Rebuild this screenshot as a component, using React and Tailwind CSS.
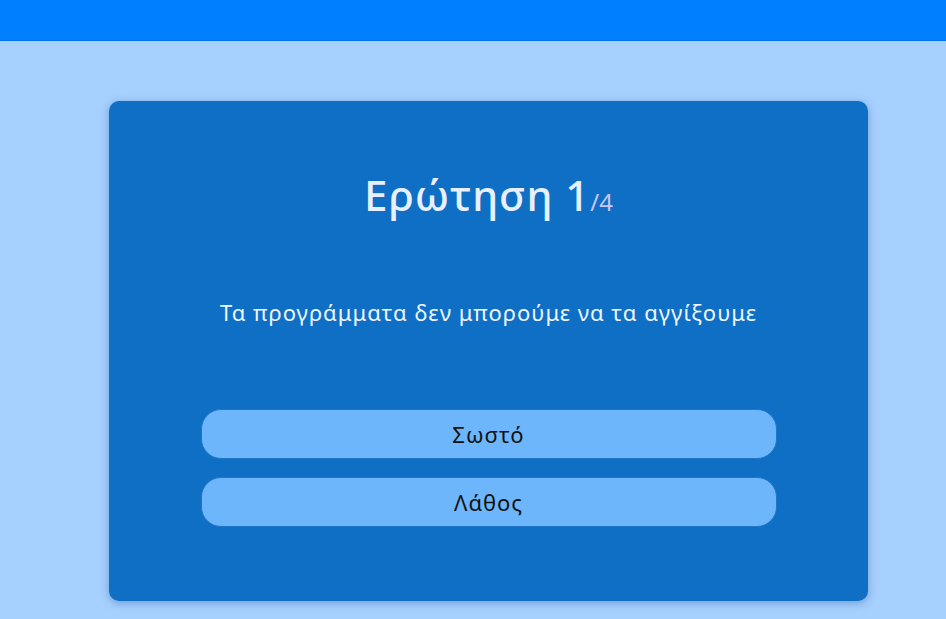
export default function App() {
  const answers = ["Σωστό", "Λάθος"];
  return (
    <div
      className="min-h-[619px] bg-[#a6d0fe]"
      style={{ fontFamily: '"Noto Sans", "Open Sans", sans-serif' }}
    >
      <header className="h-[41px] bg-[#007fff] border-b border-[#0070f0]" />
      <main className="pt-[60px] pl-[109px] pb-[18px]">
        <div className="w-[759px] h-[500px] rounded-[10px] bg-[#0f6fc5] shadow-[0_2px_8px_rgba(0,60,140,0.35)] flex flex-col items-center">
          <h1 className="mt-[68px] text-[42px] leading-[52px] font-medium text-[#e8f0ff] tracking-[1px]">
            Ερώτηση 1<span className="text-[24px] font-normal text-[#c9c6f5] tracking-normal">/4</span>
          </h1>
          <p className="mt-[70px] text-[22px] leading-[28px] text-[#eef5ff] tracking-[1px]">
            Τα προγράμματα δεν μπορούμε να τα αγγίξουμε
          </p>
          <div className="mt-[83px] w-[576px] flex flex-col gap-[18px]">
            {answers.map((a) => (
              <button
                key={a}
                type="button"
                className="h-[50px] rounded-[20px] bg-[#6db6fb] border border-[#1f77c8] text-[22px] tracking-[1px] text-[#111]"
              >
                {a}
              </button>
            ))}
          </div>
        </div>
      </main>
    </div>
  );
}
